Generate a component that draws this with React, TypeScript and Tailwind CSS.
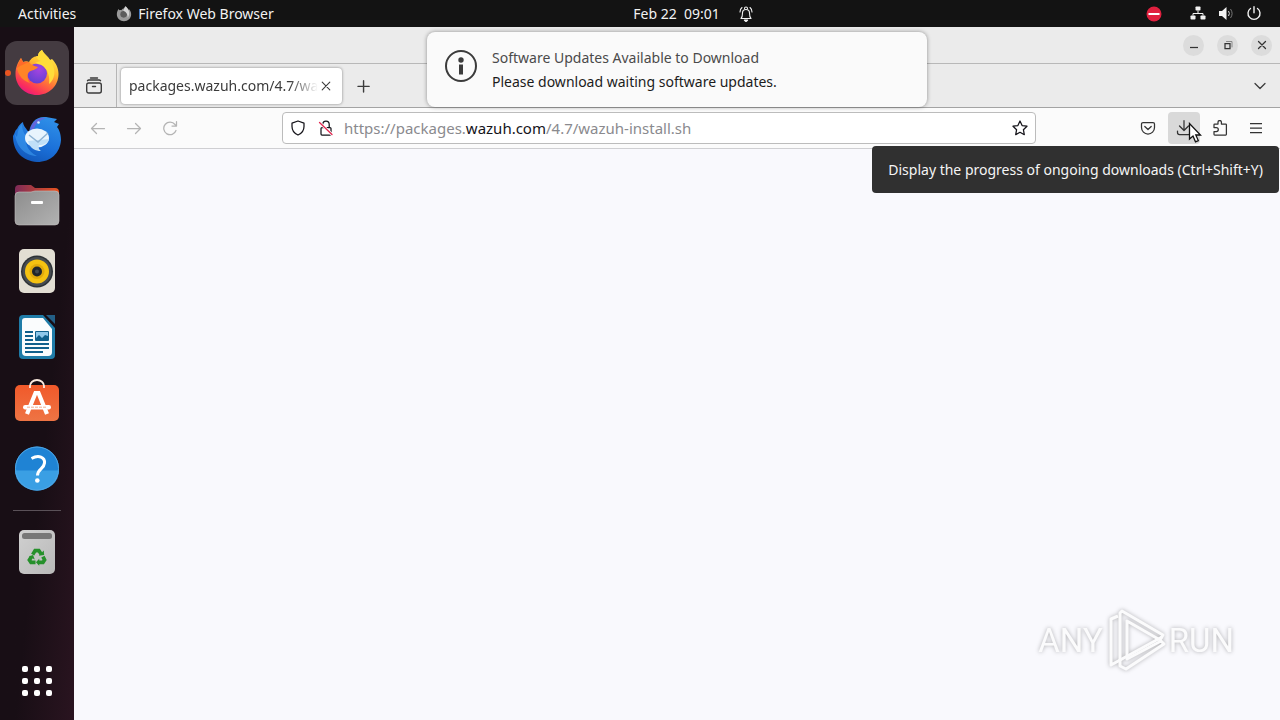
import type { ReactNode } from 'react';

const FOX_BODY =
  'M24 46C12 46 2.500 37 2.500 25C2.500 18 5 13 8 9L10 13C12 12 14 12 16 13C18 9 22 7 25 7C25 4 27 2 29 1C31 5 35 7 37 11L39 10C43 14 45.500 19 45.500 25C45.500 37 36 46 24 46Z';

function FirefoxIcon() {
  return (
    <svg viewBox="0 0 48 48" className="size-12" aria-hidden="true">
      <defs>
        <linearGradient id="fox" x1="0.8" y1="0" x2="0.25" y2="1">
          <stop offset="0" stopColor="#fff44f" />
          <stop offset="0.35" stopColor="#ffbd2e" />
          <stop offset="0.6" stopColor="#ff7139" />
          <stop offset="0.85" stopColor="#fb2f5b" />
          <stop offset="1" stopColor="#e31587" />
        </linearGradient>
        <radialGradient id="globe" cx="0.6" cy="0.3" r="0.8">
          <stop offset="0" stopColor="#a544e0" />
          <stop offset="1" stopColor="#5b3fd0" />
        </radialGradient>
      </defs>
      <path d={FOX_BODY} fill="url(#fox)" />
      <circle cx="24" cy="24.500" r="10" fill="url(#globe)" />
      <path d="M4 19C6 14 10 12 16 13C18 16 21 17 25 18C23 21 19 21 16 23C14 25 14 30 17 34C10 32 5 26 4 19Z" fill="#ff8426" />
      <path d="M25 7C25 4 27 2 29 1C31 6 36 8 39 14C43 22 42 30 36 35C37 28 35 21 30 17C27 15 24 15 22 14C24 13 26 12 28 12C25 11 23 9 25 7Z" fill="#ffdd3a" />
      <path d="M4 19C5 14 7 12 8 9L10 13L16 13C12 15 8 16 4 19Z" fill="#ff6a2a" />
    </svg>
  );
}

function ThunderbirdIcon() {
  return (
    <svg viewBox="0 0 48 48" className="size-12" aria-hidden="true">
      <defs>
        <linearGradient id="bird" x1="0.7" y1="0" x2="0.3" y2="1">
          <stop offset="0" stopColor="#2f8fe8" />
          <stop offset="0.6" stopColor="#1a6fd8" />
          <stop offset="1" stopColor="#1257b8" />
        </linearGradient>
      </defs>
      <path d="M24 47C10 46 0 37 0 21C2 18 2 15 4 14C6 10 8 8 10 7C10 11 14 14 16 18C17 8 23 1 33 2L44 4L41 7L46 9L44 12C46 14 48 19 48 25C47 38 38 47 24 47Z" fill="url(#bird)" />
      <path d="M2 19C3 31 12 41 24 41C14 36 12 28 13 21C11 18 9 15 9 9C5 13 5 17 4 22Z" fill="#3c9bf0" opacity="0.6" />
      <path d="M17 15C19 6 26 2 33 3C27 5 22 9 21 14Z" fill="#7a5ad8" opacity="0.7" />
      <ellipse cx="24" cy="23" rx="12" ry="9.500" fill="#e8f4fd" />
      <path d="M15 26C17 34 23 36 28 36C26 35 25 32 26 30C31 30 35 28 36 24Z" fill="#bfe0f8" />
      <path d="M16 20L25 27L35 18" fill="none" stroke="#8fb4d4" strokeWidth="1.500" />
      <circle cx="25.500" cy="7.500" r="1.300" fill="#d5ebff" />
    </svg>
  );
}

function FilesIcon() {
  return (
    <svg viewBox="0 0 48 48" className="size-12" aria-hidden="true">
      <defs>
        <linearGradient id="folderBack" x1="0" y1="0" x2="1" y2="0">
          <stop offset="0" stopColor="#7d2a58" />
          <stop offset="1" stopColor="#e95420" />
        </linearGradient>
        <linearGradient id="folderFront" x1="0" y1="0" x2="1" y2="1">
          <stop offset="0" stopColor="#8d8d8d" />
          <stop offset="1" stopColor="#b2b2b2" />
        </linearGradient>
      </defs>
      <path d="M2 8a4 4 0 0 1 4-4h12l4 3h20a4 4 0 0 1 4 4v12H2Z" fill="url(#folderBack)" />
      <path d="M2 15a4 4 0 0 1 4-4h12l4-1h20a4 4 0 0 1 4 4v26a4 4 0 0 1-4 4H6a4 4 0 0 1-4-4Z" fill="url(#folderFront)" stroke="#c4c0bf" strokeWidth="0.600" />
      <rect x="18" y="20" width="12" height="3" rx="1" fill="#fff" />
    </svg>
  );
}

function RhythmboxIcon() {
  return (
    <svg viewBox="0 0 48 48" className="size-12" aria-hidden="true">
      <rect x="6" y="2" width="36" height="44" rx="5" fill="#e2ded3" />
      <circle cx="24" cy="24.500" r="16" fill="#2d3236" />
      <circle cx="24" cy="24.500" r="14.500" fill="#474c50" />
      <circle cx="24" cy="24.500" r="12" fill="#f5c211" />
      <circle cx="24" cy="24.500" r="7.500" fill="#e0aa0c" />
      <circle cx="24" cy="24.500" r="5" fill="#20262b" />
      <circle cx="24" cy="24.500" r="2" fill="#434a50" />
    </svg>
  );
}

function WriterIcon() {
  return (
    <svg viewBox="0 0 48 48" className="size-12" aria-hidden="true">
      <path d="M10 2h20l12 13v27a4 4 0 0 1-4 4H10a4 4 0 0 1-4-4V6a4 4 0 0 1 4-4Z" fill="#1f7ca8" />
      <path d="M33 2h9v9Z" fill="#235f86" />
      <path d="M12 5h18l9 11v23a4 4 0 0 1-4 4H13a4 4 0 0 1-4-4V8a3 3 0 0 1 3-3Z" fill="#fafcfd" />
      <g fill="#11608c">
        <rect x="12" y="18" width="8" height="2" />
        <rect x="12" y="22" width="8" height="2" />
        <rect x="12" y="26" width="8" height="2" />
        <rect x="12" y="30" width="24" height="2" />
        <rect x="12" y="34" width="24" height="2" />
        <rect x="12" y="38" width="18" height="2" />
        <rect x="22" y="18" width="14" height="10" rx="1" />
      </g>
      <path d="M23 19h12v4l-3-1-3 3-3-3-3 3Z" fill="#8fc7ea" />
    </svg>
  );
}

function SoftwareIcon() {
  return (
    <svg viewBox="0 0 48 48" className="size-12" aria-hidden="true">
      <defs>
        <linearGradient id="bag" x1="0" y1="0" x2="0" y2="1">
          <stop offset="0" stopColor="#f1592a" />
          <stop offset="1" stopColor="#ee7444" />
        </linearGradient>
      </defs>
      <rect x="2" y="6" width="44" height="36" rx="5" fill="url(#bag)" />
      <path d="M17 9V7a7 6 0 0 1 14 0v2" fill="none" stroke="#fbeadf" strokeWidth="1.800" />
      <path d="M14 35L22.500 14h3L34 35" fill="none" stroke="#fff" strokeWidth="4.200" />
      <rect x="10" y="26" width="28" height="4.500" rx="2.200" fill="#fff" />
      <path d="M14 28.200h20" stroke="#ef9b75" strokeWidth="0.800" strokeDasharray="3 1" />
    </svg>
  );
}

function HelpIcon() {
  return (
    <svg viewBox="0 0 48 48" className="size-12" aria-hidden="true">
      <circle cx="24" cy="23.500" r="22" fill="#1f83d4" />
      <path d="M2 25.500a22 20 0 0 0 44 0Z" fill="#3a9fe4" />
      <circle cx="24" cy="23.500" r="21.500" fill="none" stroke="#4fa6e4" />
      <path d="M18.500 13.500C26 9.500 32 12.500 31.500 18C31 24 24.500 24 24.500 30.500" fill="none" stroke="#fff" strokeWidth="3" />
      <circle cx="24.300" cy="35.500" r="2.300" fill="#fff" />
    </svg>
  );
}

function TrashIcon() {
  return (
    <svg viewBox="0 0 48 48" className="size-12" aria-hidden="true">
      <defs>
        <linearGradient id="bin" x1="0" y1="0" x2="1" y2="1">
          <stop offset="0" stopColor="#d0d0d0" />
          <stop offset="1" stopColor="#b9b9b9" />
        </linearGradient>
      </defs>
      <rect x="6" y="2" width="36" height="44" rx="5" fill="url(#bin)" />
      <rect x="9" y="5" width="30" height="6" rx="2.500" fill="#777" />
      <g transform="translate(4.500 4.500) scale(0.82)">
        <g fill="none" stroke="#26902b" strokeWidth="4.500">
          <path d="M18.500 27l3-5h4.500l3 4.500" />
          <path d="M31 29.500l2 4-2 3h-6" />
          <path d="M22 36.500h-5.500l-2-3 2.500-4" />
        </g>
        <g fill="#26902b">
          <path d="M26 28.500l6.500-1-.5-5.500Z" />
          <path d="M26.500 32v8.500l-4-4.200Z" />
          <path d="M14 29l5-1.500 2 5.500Z" />
        </g>
      </g>
    </svg>
  );
}

function AppsGridIcon() {
  return (
    <svg viewBox="0 0 48 48" className="size-12" aria-hidden="true" fill="#fff">
      {[9, 21, 33].map((y) => [9, 21, 33].map((x) => <rect key={`${x}-${y}`} x={x} y={y} width="6" height="6" rx="2" />))}
    </svg>
  );
}

/* 16px line icons for the browser chrome */
function Line({ children, className = 'size-4' }: { children: ReactNode; className?: string }) {
  return (
    <svg
      viewBox="0 0 16 16"
      className={className}
      fill="none"
      stroke="currentColor"
      strokeWidth="1.250"
      strokeLinecap="round"
      strokeLinejoin="round"
      aria-hidden="true"
    >
      {children}
    </svg>
  );
}

const dockApps = [
  { label: 'Firefox Web Browser', icon: <FirefoxIcon />, active: true },
  { label: 'Thunderbird Mail', icon: <ThunderbirdIcon /> },
  { label: 'Files', icon: <FilesIcon /> },
  { label: 'Rhythmbox', icon: <RhythmboxIcon /> },
  { label: 'LibreOffice Writer', icon: <WriterIcon /> },
  { label: 'Ubuntu Software', icon: <SoftwareIcon /> },
  { label: 'Help', icon: <HelpIcon /> },
];

function TopBar() {
  return (
    <header className="grid h-[27px] shrink-0 grid-cols-[1fr_auto_1fr] items-center bg-[#131313] text-[14px] text-[#f2f2f2]">
      <div className="flex items-center pl-[18px]">
        <button type="button">Activities</button>
        <button type="button" className="ml-10 flex items-center gap-1.5">
          <svg viewBox="0 0 48 48" className="size-4" aria-hidden="true">
            <path d={FOX_BODY} fill="#9a9a9a" />
            <circle cx="23" cy="25" r="10" fill="#5c5c5c" />
            <path d="M25 7L29 1C39 10 44 24 35 35C36 25 31 17 22 14Z" fill="#d6d6d6" />
          </svg>
          Firefox Web Browser
        </button>
      </div>
      <button type="button" className="flex items-center gap-[18px] pl-[107px]">
        <span className="whitespace-pre">Feb 22  09:01</span>
        <Line>
          <path d="M3 12.500c1.500-1.500 1.500-3 1.500-5.500a3.500 3.500 0 0 1 7 0c0 2.500 0 4 1.500 5.500ZM6.500 2.500a1.500 1.500 0 0 1 3 0M2 6c0-2 .7-3.500 2-4.500M14 6c0-2-.7-3.500-2-4.500" strokeWidth="1.100" />
          <path d="M6.500 14.200h3l-1.500 1.300Z" fill="currentColor" />
        </Line>
      </button>
      <div className="flex items-center justify-end pr-[18px]">
        <svg viewBox="0 0 16 16" className="mr-7 size-4" aria-hidden="true">
          <circle cx="8" cy="8" r="7.500" fill="#e0203f" />
          <rect x="2.500" y="7" width="11" height="2" fill="#fff" />
        </svg>
        <button type="button" className="flex items-center gap-3" aria-label="System menu">
          <svg viewBox="0 0 16 16" className="size-4" aria-hidden="true">
            <g fill="#f2f2f2">
              <rect x="5.500" y="0.500" width="5" height="4" rx="0.800" />
              <rect x="0.500" y="9.500" width="5" height="4" rx="0.800" />
              <rect x="10.500" y="9.500" width="5" height="4" rx="0.800" />
            </g>
            <path d="M8 4.500v3M3 9.500v-2h10v2" fill="none" stroke="#f2f2f2" />
          </svg>
          <svg viewBox="0 0 16 16" className="size-4" aria-hidden="true">
            <path d="M1 5h3L8.500 1v13L4 10H1Z" fill="#f2f2f2" />
            <path d="M10.500 5q1.800 2.500 0 5" fill="none" stroke="#d5d5d5" />
            <path d="M12.500 3q3.200 4.500 0 9" fill="none" stroke="#777" />
          </svg>
          <Line>
            <path d="M4.500 2.500a6 6 0 1 0 7 0M8 .7v6" strokeWidth="1.400" />
          </Line>
        </button>
      </div>
    </header>
  );
}

function Dock() {
  return (
    <nav aria-label="Dock" className="flex w-[74px] shrink-0 flex-col items-center bg-linear-to-br from-[#180e15] from-60% to-[#2a1420] pt-3.5 pb-[7px]">
      <div className="flex flex-col gap-0.5">
        {dockApps.map((app) => (
          <button
            key={app.label}
            type="button"
            aria-label={app.label}
            className={`relative flex size-16 items-center justify-center rounded-xl ${app.active ? 'bg-[#443b41]' : ''}`}
          >
            {app.active && <span className="absolute left-0 size-[6px] rounded-full bg-[#e95420]" />}
            {app.icon}
          </button>
        ))}
      </div>
      <hr className="mt-[9px] mb-[9px] w-12 border-[#5a5158]" />
      <button type="button" aria-label="Trash" className="flex size-16 items-center justify-center">
        <TrashIcon />
      </button>
      <button type="button" aria-label="Show Applications" className="mt-auto flex size-16 items-center justify-center">
        <AppsGridIcon />
      </button>
    </nav>
  );
}

function TitleBar() {
  const round = 'flex size-[21px] items-center justify-center rounded-full bg-[#dcdcdc]';
  return (
    <div className="flex h-[37px] shrink-0 items-center justify-end gap-[13px] border-b border-[#b8b8b8] bg-[#ebebeb] pr-2 text-[#333]">
      <button type="button" aria-label="Minimize" className={round}>
        <Line>
          <path d="M4 10.500h8" strokeLinecap="butt" />
        </Line>
      </button>
      <button type="button" aria-label="Restore" className={round}>
        <Line>
          <path d="M5 6.500h5v5H5Z" strokeLinejoin="miter" />
          <path d="M6.500 4.500H12V10" strokeWidth="1" stroke="#888" />
        </Line>
      </button>
      <button type="button" aria-label="Close" className={round}>
        <Line>
          <path d="M4.500 4.500l7 7M11.500 4.500l-7 7" />
        </Line>
      </button>
    </div>
  );
}

function TabStrip() {
  return (
    <div className="flex h-11 shrink-0 items-center border-b border-[#a3a3a3] bg-[#ebebeb] text-[#3b3b3b]">
      <button type="button" aria-label="Recent browsing" className="flex h-full w-[43px] items-center justify-center border-r border-[#b5b5b5] pr-0.5">
        <svg viewBox="0 0 18 18" className="size-[18px]" fill="none" stroke="currentColor" strokeWidth="1.400" strokeLinecap="round" aria-hidden="true">
          <rect x="1.700" y="6" width="14.600" height="10" rx="2" />
          <path d="M2.500 3.700Q3 3 4 3h10q1 0 1.500.7M5.500 1h7M7.500 9.500h3" />
        </svg>
      </button>
      <div className="ml-1 flex h-9 w-[221px] items-center rounded-sm bg-white pr-2 pl-2 shadow-[0_0_3px_rgba(0,0,0,0.45)]">
        <span className="min-w-0 flex-1 mask-r-from-85% text-[14px] whitespace-nowrap">packages.wazuh.com/4.7/wa</span>
        <button type="button" aria-label="Close tab">
          <Line>
            <path d="M4.200 4.200l7.600 7.600M11.800 4.200l-7.600 7.600" strokeWidth="1.100" />
          </Line>
        </button>
      </div>
      <button type="button" aria-label="New tab" className="ml-3">
        <Line className="size-[18px]">
          <path d="M8.500 3.300v10M3.500 8.300h10" />
        </Line>
      </button>
      <button type="button" aria-label="List all tabs" className="mr-3 ml-auto">
        <Line>
          <path d="M3 5.500l5 5 5-5" />
        </Line>
      </button>
    </div>
  );
}

function Toolbar() {
  const button = 'flex size-8 items-center justify-center rounded-sm';
  return (
    <div className="relative flex h-[41px] shrink-0 items-center border-b border-[#cfcfd2] bg-[#fbfbfb] px-2 text-[#333]">
      <div className="flex w-[200px] shrink-0 gap-1 text-[#b4b4b4]">
        <button type="button" aria-label="Back" className={button}>
          <Line>
            <path d="M14.500 8.500h-13M6.500 3.500l-5 5 5 5" />
          </Line>
        </button>
        <button type="button" aria-label="Forward" className={button}>
          <Line>
            <path d="M1.500 8.500h13M9.500 3.500l5 5-5 5" />
          </Line>
        </button>
        <button type="button" aria-label="Reload" className={button}>
          <Line>
            <path d="M14 10.500a6.300 6.300 0 1 1-1-6L14.500 6M14.500 1.500V6H10" />
          </Line>
        </button>
      </div>
      <div className="flex h-8 flex-1 items-center rounded-sm border border-[#bcbcbc] bg-white pr-[7px] pl-[7px] text-[#15141a]">
        <button type="button" aria-label="Tracking protection">
          <Line>
            <path d="M8 1l6 2.200v3.300C14 10.500 11.500 13.500 8 15 4.500 13.500 2 10.500 2 6.500V3.200Z" />
          </Line>
        </button>
        <button type="button" aria-label="Connection not secure" className="ml-3">
          <Line>
            <path d="M3 8.500a1 1 0 0 1 1-1h8a1 1 0 0 1 1 1V14a1 1 0 0 1-1 1H4a1 1 0 0 1-1-1ZM4.800 7V4.200a3.200 3.200 0 0 1 6.400 0V7" />
            <path d="M1.500 2.500l12.500 12" stroke="#fff" strokeWidth="3" />
            <path d="M1.500 2.500l12.500 12" stroke="#e22850" strokeWidth="1.300" />
          </Line>
        </button>
        <div role="textbox" aria-label="Address" contentEditable suppressContentEditableWarning className="ml-2.5 flex-1 text-[15px] whitespace-nowrap text-[#8a8a8e] outline-none">
          https://packages.<span className="text-[#15141a]">wazuh.com</span>/4.7/wazuh-install.sh
        </div>
        <button type="button" aria-label="Bookmark this page">
          <Line>
            <path d="M8 1l2.100 4.600 4.900.600-3.600 3.500.9 5L8 12.300l-4.300 2.400.9-5L1 6.200l4.900-.6Z" />
          </Line>
        </button>
      </div>
      <div className="ml-24 flex gap-1">
        <button type="button" aria-label="Save to Pocket" className={button}>
          <Line>
            <path d="M3 2.500h10A1.500 1.500 0 0 1 14.500 4v3.500a6.500 6.500 0 0 1-13 0V4A1.500 1.500 0 0 1 3 2.500ZM4.800 6.500L8 9.500l3.200-3" />
          </Line>
        </button>
        <button type="button" aria-label="Downloads" className={`${button} relative bg-[#d9d9d9]`}>
          <Line>
            <path d="M8 .7v9.600M3.500 6L8 10.500 12.500 6M1.500 11v1.500a2 2 0 0 0 2 2h9a2 2 0 0 0 2-2V11" />
          </Line>
          <svg viewBox="0 0 14 22" className="absolute top-[10px] left-5 z-10 h-[22px] w-3.5" aria-hidden="true">
            <path d="M1.500 1.500v15.500l3.500-3 2.500 5.800 2.800-1.200-2.500-5.600h4.700Z" fill="#fff" stroke="#111" strokeWidth="1.300" />
          </svg>
        </button>
        <button type="button" aria-label="Extensions" className={button}>
          <Line>
            <path d="M2 7.500V4.700a.7.700 0 0 1 .7-.7H6V2.200a1.700 1.700 0 0 1 3.400 0V4h4.300a.7.700 0 0 1 .7.700v9.600a.7.700 0 0 1-.7.700H2.700a.7.700 0 0 1-.7-.7v-2.800h2.300a2 2 0 0 0 0-4Z" />
          </Line>
        </button>
        <button type="button" aria-label="Open application menu" className={button}>
          <Line>
            <path d="M2 3.500h12M2 8h12M2 12.500h12" strokeLinecap="butt" />
          </Line>
        </button>
      </div>
      <div role="tooltip" className="absolute top-[38px] right-px rounded-sm bg-[#303030] px-4 py-[13px] text-[14px] leading-[21px] whitespace-nowrap text-[#f5f5f5]">
        Display the progress of ongoing downloads (Ctrl+Shift+Y)
      </div>
    </div>
  );
}

function Notification() {
  return (
    <div role="status" className="absolute top-[5px] left-1/2 flex h-[75px] w-[500px] -translate-x-1/2 items-center rounded-lg bg-[#fafafa] pl-[17px] text-[14px] shadow-[0_0_4px_rgba(0,0,0,0.4)]">
      <svg viewBox="0 0 34 34" className="mb-2 size-[34px]" aria-hidden="true">
        <circle cx="17" cy="17" r="15" fill="none" stroke="#3b3b3b" strokeWidth="2" />
        <circle cx="17" cy="11" r="2.700" fill="#3b3b3b" />
        <rect x="15" y="15.500" width="4" height="10" fill="#3b3b3b" />
      </svg>
      <div className="ml-3.5 leading-6">
        <p className="text-[#4a4a4a]">Software Updates Available to Download</p>
        <p className="text-[#1c1c1c]">Please download waiting software updates.</p>
      </div>
    </div>
  );
}

function Watermark() {
  return (
    <div className="flex items-center font-['Roboto',sans-serif] text-[33px] leading-none text-[#fbfbfc] drop-shadow-[0_0_2px_rgba(0,0,0,0.3)]">
      <span>ANY</span>
      <svg viewBox="0 0 64 64" className="h-16 w-[66px]" fill="none" stroke="currentColor" strokeWidth="3" strokeLinejoin="round" aria-hidden="true">
        <path d="M18 3L59 27l-3 5L23 13v38l34-18 3 3-38 25-6-3V5Z" />
        <path d="M14 8l-7 3v46l51-28" />
      </svg>
      <span>RUN</span>
    </div>
  );
}

export default function App() {
  return (
    <div className="flex min-h-screen flex-col font-['Noto_Sans','Open_Sans',sans-serif]">
      <TopBar />
      <div className="flex flex-1">
        <Dock />
        <main className="relative flex min-w-0 flex-1 flex-col bg-[#f9f9fd]">
          <TitleBar />
          <TabStrip />
          <Toolbar />
          <div className="flex flex-1 items-end justify-end pr-[46px] pb-12">
            <Watermark />
          </div>
          <Notification />
        </main>
      </div>
    </div>
  );
}
